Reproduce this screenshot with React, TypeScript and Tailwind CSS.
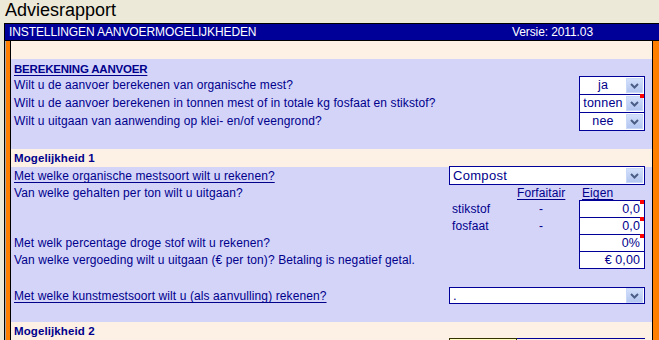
import type { ReactNode } from "react";

const navy = "text-[#00008b]";

function Chevron() {
  return (
    <svg width="9" height="6" viewBox="0 0 9 6" className="block">
      <path d="M1 1 L4.5 4.5 L8 1" fill="none" stroke="#4b5e86" strokeWidth="2" />
    </svg>
  );
}

function Select({
  value,
  center,
  mark,
  className,
}: {
  value: string;
  center?: boolean;
  mark?: boolean;
  className?: string;
}) {
  return (
    <div
      className={`relative flex items-center bg-white border border-[#000099] ${className ?? ""}`}
    >
      <span className={`flex-1 leading-none ${center ? "text-center text-[12.5px] tracking-[0.2px]" : "pl-[3px] text-[13px] tracking-[0.3px]"}`}>
        {value}
      </span>
      <span className="mr-px flex h-[15px] w-[17px] shrink-0 items-center justify-center border border-[#c9d8f8] bg-gradient-to-b from-[#d3e0fc] to-[#b3c6f0]">
        <Chevron />
      </span>
      {mark && <span className="absolute -top-px right-0 h-[4px] w-[4px] bg-[#ff0000]" />}
    </div>
  );
}

function Box({ value, mark, className }: { value: string; mark?: boolean; className?: string }) {
  return (
    <div
      className={`relative flex w-[66px] items-center justify-end border border-[#000099] bg-white pr-[4px] text-[12.5px] leading-none ${className ?? ""}`}
    >
      {value}
      {mark && <span className="absolute -top-px right-0 h-[4px] w-[4px] bg-[#ff0000]" />}
    </div>
  );
}

function Row({ h, children }: { h: string; children: ReactNode }) {
  return <div className={`flex items-start justify-between ${h}`}>{children}</div>;
}

function Label({ children, u }: { children: ReactNode; u?: boolean }) {
  return (
    <span className={`pt-[2px] leading-[14px] ${u ? "underline underline-offset-2" : ""}`}>{children}</span>
  );
}

function ValueRow({ h, label, dash, box }: { h: string; label?: string; dash?: boolean; box: ReactNode }) {
  return (
    <div className={`grid grid-cols-[68px_62px_66px] items-start ${h}`}>
      <span className="pl-[3px] pt-[2px] leading-[14px]">{label}</span>
      <span className="w-[48px] pt-[2px] text-center leading-[14px]">{dash ? "-" : ""}</span>
      {box}
    </div>
  );
}

export default function App() {
  return (
    <div
      className={`h-[340px] w-[659px] overflow-hidden bg-[#ece9d8] font-['Liberation_Sans',Arial,sans-serif] text-[12px] tracking-[0.1px] ${navy}`}
    >
      <div className="h-[23px] pl-[5px] text-[18px] leading-[20px] tracking-normal text-black">Adviesrapport</div>
      <div className="ml-[4px] border-l border-t border-black">
        <div className="flex h-[17px] items-center justify-between border-b border-black bg-[#000099] pl-[4px] pr-[66px] text-[12px] leading-none tracking-[-0.1px] text-white">
          <span>INSTELLINGEN AANVOERMOGELIJKHEDEN</span>
          <span>Versie: 2011.03</span>
        </div>
        <div className="flex">
          <div className="w-px bg-[#a8a8a8]" />
          <div className="w-[5px] border-r border-black bg-[#ff8000]" />
          <div className="flex-1">
            <div className="h-[18px] bg-[#fdf0e5]" />

            <div className="bg-[#d4d4f9] pl-[3px] pr-[7px]">
              <div className="h-[17px] pt-[3px] text-[11.5px] font-bold leading-[14px] tracking-[-0.2px] underline underline-offset-2">
                BEREKENING AANVOER
              </div>
              <Row h="h-[18px]">
                <Label>Wilt u de aanvoer berekenen van organische mest?</Label>
                <Select value="ja" center className="h-[19px] w-[66px]" />
              </Row>
              <Row h="h-[18px]">
                <Label>Wilt u de aanvoer berekenen in tonnen mest of in totale kg fosfaat en stikstof?</Label>
                <Select value="tonnen" center mark className="h-[19px] w-[66px]" />
              </Row>
              <Row h="h-[18px]">
                <Label>Wilt u uitgaan van aanwending op klei- en/of veengrond?</Label>
                <Select value="nee" center className="h-[19px] w-[66px]" />
              </Row>
              <div className="h-[19px]" />
            </div>

            <div className="h-[18px] bg-[#fdf0e5] pl-[3px] pt-[2px] text-[11.5px] font-bold leading-[14px]">
              Mogelijkheid 1
            </div>

            <div className="bg-[#d4d4f9] pl-[3px] pr-[7px]">
              <Row h="h-[18px]">
                <Label u>Met welke organische mestsoort wilt u rekenen?</Label>
                <Select value="Compost" className="-mt-px h-[19px] w-[196px]" />
              </Row>
              <div className="flex h-[15px] items-start justify-between">
                <span className="pt-px leading-[14px]">Van welke gehalten per ton wilt u uitgaan?</span>
                <div className="grid w-[196px] grid-cols-[68px_62px_66px] pt-px leading-[14px]">
                  <span />
                  <span className="underline underline-offset-2">Forfaitair</span>
                  <span className="pl-[3px] underline underline-offset-2">Eigen</span>
                </div>
              </div>
              <div className="flex justify-end">
                <div>
                  <ValueRow h="h-[17px]" label="stikstof" dash box={<Box value="0,0" mark className="h-[18px]" />} />
                  <ValueRow h="h-[17px]" label="fosfaat" dash box={<Box value="0,0" mark className="h-[18px]" />} />
                </div>
              </div>
              <Row h="h-[17px]">
                <Label>Met welk percentage droge stof wilt u rekenen?</Label>
                <Box value="0%" mark className="h-[18px]" />
              </Row>
              <Row h="h-[18px]">
                <Label>Van welke vergoeding wilt u uitgaan (€ per ton)? Betaling is negatief getal.</Label>
                <Box value="€ 0,00" className="h-[18px]" />
              </Row>
              <div className="h-[18px]" />
              <Row h="h-[17px]">
                <Label u>Met welke kunstmestsoort wilt u (als aanvulling) rekenen?</Label>
                <Select value="." className="h-[17px] w-[196px]" />
              </Row>
              <div className="h-[18px]" />
            </div>

            <div className="h-[30px] bg-[#fdf0e5] pl-[3px] pr-[7px]">
              <div className="h-[16px] pt-[2px] text-[11.5px] font-bold leading-[14px]">Mogelijkheid 2</div>
              <div className="flex justify-end">
                <div className="h-[10px] w-[68px] border border-[#333300] bg-[#ffffc0]" />
                <div className="h-[10px] w-[128px] border-t border-[#000099]" />
              </div>
            </div>
          </div>
          <div className="w-[7px] border-l border-black bg-[#ff8000]" />
        </div>
      </div>
    </div>
  );
}
